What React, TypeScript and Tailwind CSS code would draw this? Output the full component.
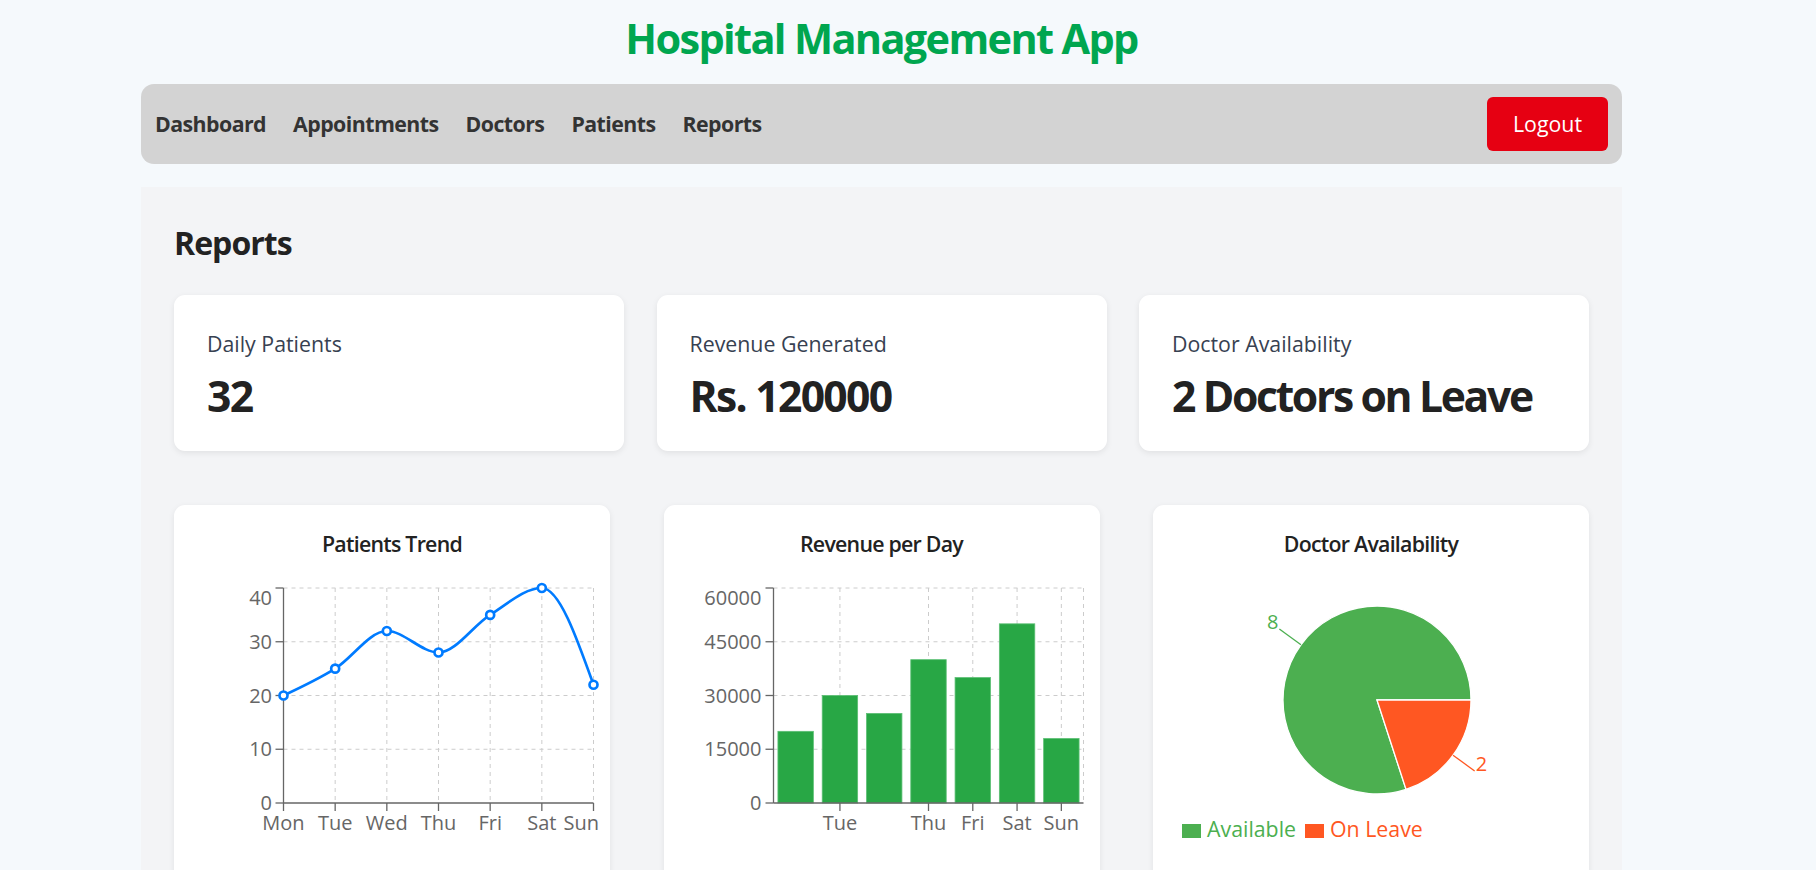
import React from "react";

type Pt = { x: number; y: number };

function monotonePath(pts: Pt[]): string {
  const n = pts.length;
  const dx: number[] = [];
  const m: number[] = [];
  for (let i = 0; i < n - 1; i++) {
    dx.push(pts[i + 1].x - pts[i].x);
    m.push((pts[i + 1].y - pts[i].y) / dx[i]);
  }
  const t: number[] = new Array(n).fill(0);
  for (let i = 1; i < n - 1; i++) {
    const s0 = m[i - 1];
    const s1 = m[i];
    const h0 = dx[i - 1];
    const h1 = dx[i];
    const p = (s0 * h1 + s1 * h0) / (h0 + h1);
    t[i] = (Math.sign(s0) + Math.sign(s1)) * Math.min(Math.abs(s0), Math.abs(s1), 0.5 * Math.abs(p)) || 0;
  }
  t[0] = (3 * m[0] - t[1]) / 2;
  t[n - 1] = (3 * m[n - 2] - t[n - 2]) / 2;
  let d = `M${pts[0].x},${pts[0].y}`;
  for (let i = 0; i < n - 1; i++) {
    const h = dx[i] / 3;
    d += `C${pts[i].x + h},${pts[i].y + t[i] * h},${pts[i + 1].x - h},${pts[i + 1].y - t[i + 1] * h},${pts[i + 1].x},${pts[i + 1].y}`;
  }
  return d;
}

const DAYS = ["Mon", "Tue", "Wed", "Thu", "Fri", "Sat", "Sun"];
const PATIENTS = [20, 25, 32, 28, 35, 40, 22];
const REVENUE = [20000, 30000, 25000, 40000, 35000, 50000, 18000];

const TOP = 28;
const BOTTOM = 243;
const LEFT = 109.5;
const RIGHT = 419.5;
const FS = 20;

function LineChartSvg() {
  const step = (RIGHT - LEFT) / 6;
  const pts = PATIENTS.map((v, i) => ({ x: LEFT + step * i, y: BOTTOM - (v / 40) * (BOTTOM - TOP) }));
  const yTicks = [0, 10, 20, 30, 40];
  return (
    <svg width={436} height={320} className="block">
      {yTicks.map((v) => {
        const y = BOTTOM - (v / 40) * (BOTTOM - TOP);
        return v === 0 ? null : (
          <line key={v} x1={LEFT} x2={RIGHT} y1={y} y2={y} stroke="#ccc" strokeDasharray="4 4" />
        );
      })}
      {DAYS.map((_, i) => {
        const x = LEFT + step * i;
        return i === 0 ? null : <line key={i} x1={x} x2={x} y1={TOP} y2={BOTTOM} stroke="#ccc" strokeDasharray="4 4" />;
      })}
      <line x1={LEFT} x2={LEFT} y1={TOP} y2={BOTTOM} stroke="#666" strokeWidth={1.3} />
      <line x1={LEFT} x2={RIGHT} y1={BOTTOM} y2={BOTTOM} stroke="#666" strokeWidth={1.3} />
      {yTicks.map((v) => {
        const y = BOTTOM - (v / 40) * (BOTTOM - TOP);
        return (
          <g key={v}>
            <line x1={LEFT - 8} x2={LEFT} y1={y} y2={y} stroke="#666" strokeWidth={1.3} />
            <text x={98} y={v === 40 ? y + 10 : y} dy="0.355em" textAnchor="end" fontSize={FS} fill="#666">
              {v}
            </text>
          </g>
        );
      })}
      {DAYS.map((d, i) => {
        const x = LEFT + step * i;
        const last = i === DAYS.length - 1;
        return (
          <g key={d}>
            <line x1={x} x2={x} y1={BOTTOM} y2={BOTTOM + 8} stroke="#666" strokeWidth={1.3} />
            <text
              x={last ? 425 : x}
              y={270}
              textAnchor={last ? "end" : "middle"}
              fontSize={FS}
              fill="#666"
            >
              {d}
            </text>
          </g>
        );
      })}
      <path d={monotonePath(pts)} fill="none" stroke="#007bff" strokeWidth={2.67} />
      {pts.map((p, i) => (
        <circle key={i} cx={p.x} cy={p.y} r={4} fill="#fff" stroke="#007bff" strokeWidth={2.67} />
      ))}
    </svg>
  );
}

function BarChartSvg() {
  const band = (RIGHT - LEFT) / 7;
  const yTicks = [0, 15000, 30000, 45000, 60000];
  const shown = [1, 3, 4, 5, 6];
  return (
    <svg width={436} height={320} className="block">
      {yTicks.map((v) => {
        const y = BOTTOM - (v / 60000) * (BOTTOM - TOP);
        return v === 0 ? null : (
          <line key={v} x1={LEFT} x2={RIGHT} y1={y} y2={y} stroke="#ccc" strokeDasharray="4 4" />
        );
      })}
      {shown.map((i) => {
        const x = LEFT + band * (i + 0.5);
        return <line key={i} x1={x} x2={x} y1={TOP} y2={BOTTOM} stroke="#ccc" strokeDasharray="4 4" />;
      })}
      <line x1={RIGHT} x2={RIGHT} y1={TOP} y2={BOTTOM} stroke="#ccc" strokeDasharray="4 4" />
      {REVENUE.map((v, i) => {
        const h = (v / 60000) * (BOTTOM - TOP);
        return (
          <rect
            key={i}
            x={LEFT + band * i + band * 0.1}
            y={BOTTOM - h}
            width={band * 0.8}
            height={h}
            fill="#28a745"
            stroke="#5cbf74"
            strokeWidth={0.8}
          />
        );
      })}
      <line x1={LEFT} x2={LEFT} y1={TOP} y2={BOTTOM} stroke="#666" strokeWidth={1.3} />
      <line x1={LEFT} x2={RIGHT} y1={BOTTOM} y2={BOTTOM} stroke="#666" strokeWidth={1.3} />
      {yTicks.map((v) => {
        const y = BOTTOM - (v / 60000) * (BOTTOM - TOP);
        return (
          <g key={v}>
            <line x1={LEFT - 8} x2={LEFT} y1={y} y2={y} stroke="#666" strokeWidth={1.3} />
            <text x={97.5} y={v === 60000 ? y + 10 : y} dy="0.355em" textAnchor="end" fontSize={FS} fill="#666">
              {v}
            </text>
          </g>
        );
      })}
      {shown.map((i) => {
        const x = LEFT + band * (i + 0.5);
        return (
          <g key={i}>
            <line x1={x} x2={x} y1={BOTTOM} y2={BOTTOM + 8} stroke="#666" strokeWidth={1.3} />
            <text x={x} y={270} textAnchor="middle" fontSize={FS} fill="#666">
              {DAYS[i]}
            </text>
          </g>
        );
      })}
    </svg>
  );
}

function PieChartSvg() {
  const cx = 224;
  const cy = 140;
  const r = 94;
  const a = (72 * Math.PI) / 180;
  const ex = cx + r * Math.cos(a);
  const ey = cy + r * Math.sin(a);
  const green = `M${cx},${cy}L${cx + r},${cy}A${r},${r},0,1,0,${ex},${ey}Z`;
  const orange = `M${cx},${cy}L${ex},${ey}A${r},${r},0,0,0,${cx + r},${cy}Z`;
  const gm = (144 * Math.PI) / 180;
  const om = (324 * Math.PI) / 180;
  const g1 = { x: cx + r * Math.cos(gm), y: cy - r * Math.sin(gm) };
  const g2 = { x: cx + (r + 26.7) * Math.cos(gm), y: cy - (r + 26.7) * Math.sin(gm) };
  const o1 = { x: cx + r * Math.cos(om), y: cy - r * Math.sin(om) };
  const o2 = { x: cx + (r + 26.7) * Math.cos(om), y: cy - (r + 26.7) * Math.sin(om) };
  return (
    <svg width={436} height={320} className="block">
      <path d={green} fill="#4caf50" stroke="#fff" strokeWidth={1.3} />
      <path d={orange} fill="#ff5722" stroke="#fff" strokeWidth={1.3} />
      <line x1={g1.x} y1={g1.y} x2={g2.x} y2={g2.y} stroke="#4caf50" strokeWidth={1.3} />
      <line x1={o1.x} y1={o1.y} x2={o2.x} y2={o2.y} stroke="#ff5722" strokeWidth={1.3} />
      <text x={g2.x - 1} y={g2.y} textAnchor="end" fontSize={FS} fill="#4caf50">
        8
      </text>
      <text x={o2.x + 1} y={o2.y} textAnchor="start" fontSize={FS} fill="#ff5722">
        2
      </text>
      <rect x={29} y={264} width={19} height={14} fill="#4caf50" />
      <text x={54} y={277} fontSize={21.33} fill="#4caf50">
        Available
      </text>
      <rect x={152} y={264} width={19} height={14} fill="#ff5722" />
      <text x={177} y={277} fontSize={21.33} fill="#ff5722">
        On Leave
      </text>
    </svg>
  );
}

function ChartCard({ title, children }: { title: string; children: React.ReactNode }) {
  return (
    <div className="h-[380px] w-[436px] rounded-[11px] bg-white pt-[23px] shadow-[0_2px_6px_rgba(0,0,0,0.08)]">
      <h3 className="text-center text-[21.33px] leading-[32px] font-semibold tracking-[-0.035em] text-[#222]">
        {title}
      </h3>
      {children}
    </div>
  );
}

const STATS = [
  { label: "Daily Patients", value: "32", track: "tracking-[-0.04em]" },
  { label: "Revenue Generated", value: "Rs. 120000", track: "tracking-[-0.04em]" },
  { label: "Doctor Availability", value: "2 Doctors on Leave", track: "tracking-[-0.055em]" },
];

export default function App() {
  return (
    <div className="min-h-screen bg-[#f5f9fc] font-['Open_Sans',sans-serif]">
      <div className="ml-[141px] w-[1481px]">
        <h1 className="pt-[13px] text-center text-[41.5px] leading-[51px] font-bold tracking-[-0.04em] text-[#00a64f]">
          Hospital Management App
        </h1>
        <nav className="mt-[20px] flex h-[80px] items-center justify-between rounded-[13px] bg-[#d3d3d3] px-[14px]">
          <div className="flex gap-[27px] text-[21.33px] font-bold tracking-[-0.026em] text-[#333]">
            <span>Dashboard</span>
            <span>Appointments</span>
            <span>Doctors</span>
            <span>Patients</span>
            <span>Reports</span>
          </div>
          <button className="h-[54px] w-[121px] rounded-[6px] bg-[#e60012] text-[21.33px] text-white">Logout</button>
        </nav>
        <main className="mt-[23px] bg-[#f3f4f6] px-[33px] pt-[37px] pb-[40px]">
          <h2 className="text-[32px] leading-[38px] font-bold tracking-[-0.03em] text-[#222]">Reports</h2>
          <div className="mt-[33px] grid grid-cols-3 gap-[32.5px]">
            {STATS.map((s) => (
              <div
                key={s.label}
                className="h-[156px] rounded-[11px] bg-white px-[33px] pt-[33px] shadow-[0_2px_6px_rgba(0,0,0,0.08)]"
              >
                <div className="text-[21.33px] leading-[32px] text-[#374151]">{s.label}</div>
                <div
                  className={`mt-[10px] whitespace-nowrap text-[42.67px] leading-[51px] font-bold text-[#222] ${s.track}`}
                >
                  {s.value}
                </div>
              </div>
            ))}
          </div>
          <div className="mt-[54px] flex justify-between">
            <ChartCard title="Patients Trend">
              <LineChartSvg />
            </ChartCard>
            <ChartCard title="Revenue per Day">
              <BarChartSvg />
            </ChartCard>
            <ChartCard title="Doctor Availability">
              <PieChartSvg />
            </ChartCard>
          </div>
        </main>
      </div>
    </div>
  );
}
